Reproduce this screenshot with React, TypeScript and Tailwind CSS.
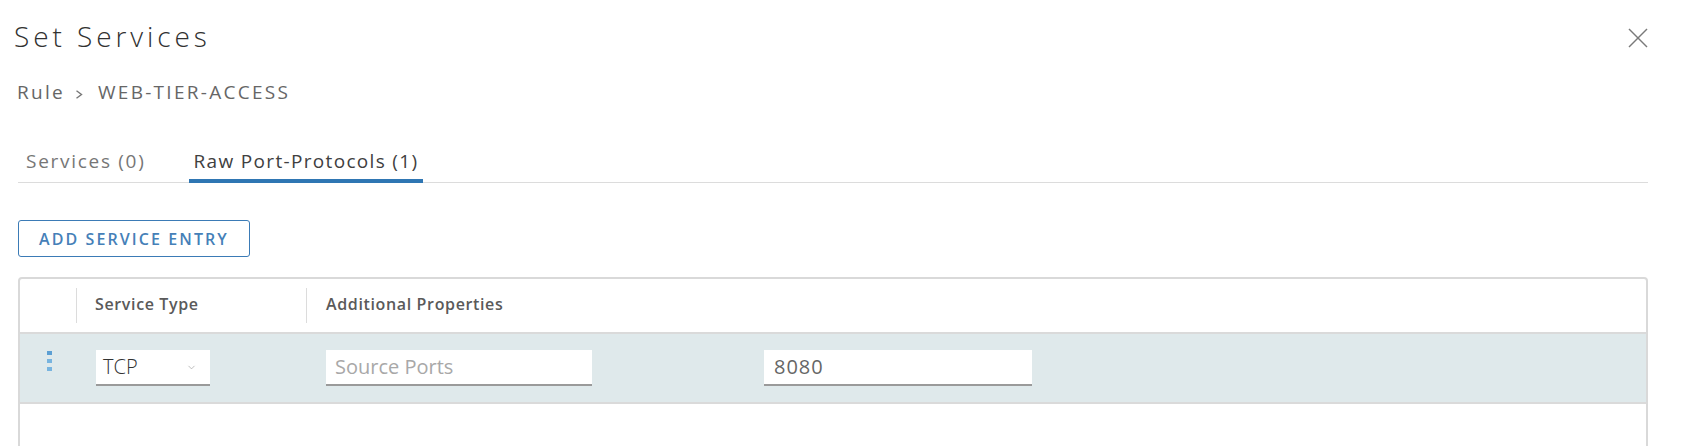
import { ChevronDown } from 'lucide-react';

function CloseIcon() {
  return (
    <svg width="20" height="20" viewBox="0 0 20 20" fill="none" stroke="#7a7a7a" strokeWidth="1.5">
      <line x1="1" y1="1" x2="19" y2="19" />
      <line x1="19" y1="1" x2="1" y2="19" />
    </svg>
  );
}

function Crumb() {
  return (
    <svg width="8" height="9" viewBox="0 0 8 9" fill="none" stroke="#777" strokeWidth="1.4">
      <polyline points="1.5,0.8 6.5,4.5 1.5,8.2" />
    </svg>
  );
}

function DragHandle() {
  return (
    <div className="flex flex-col gap-[4px]">
      <span className="block w-[5px] h-[4px] bg-[#5c9fd3]" />
      <span className="block w-[5px] h-[4px] bg-[#78b4df]" />
      <span className="block w-[5px] h-[4px] bg-[#78b4df]" />
    </div>
  );
}

export default function App() {
  return (
    <div className="w-[1682px] h-[446px] overflow-hidden bg-white font-['Open_Sans',sans-serif]">
      <div className="pl-[18px] pr-[34px]">
        {/* Title */}
        <div className="flex justify-between items-start pt-[16px]">
          <h1 className="-ml-[4px] text-[28px] leading-[40px] font-light tracking-[0.14em] text-[#313131]">
            Set Services
          </h1>
          <button className="mt-[12px] w-[20px] h-[20px]" aria-label="Close">
            <CloseIcon />
          </button>
        </div>

        {/* Breadcrumb */}
        <div className="mt-[23px] h-[26px] flex items-baseline text-[19px] leading-[26px] tracking-[0.12em] text-[#666]">
          <span className="-ml-[1px]">Rule</span>
          <span className="ml-[10px] self-end mb-[6px]">
            <Crumb />
          </span>
          <span className="ml-[15px]">WEB-TIER-ACCESS</span>
        </div>

        {/* Tabs */}
        <div className="mt-[43px] flex border-b border-[#dcdcdc] text-[19px] leading-[26px]">
          <button className="ml-[3px] px-[5px] pb-[5px] -mb-px border-b-4 border-transparent tracking-[0.09em] text-[#767676]">
            Services (0)
          </button>
          <button className="ml-[38px] px-[5px] pb-[5px] -mb-px border-b-4 border-[#2f76b3] tracking-[0.07em] text-[#404040]">
            Raw Port-Protocols (1)
          </button>
        </div>

        {/* Add entry */}
        <button className="mt-[37px] h-[37px] w-[232px] rounded-[3px] border border-[#3b7bb6] text-[16px] font-semibold tracking-[0.13em] text-[#4580b8]">
          ADD SERVICE ENTRY
        </button>

        {/* Grid */}
        <div className="mt-[20px] h-[220px] rounded-t-[4px] border-2 border-[#d9d9d9]">
          <div className="flex items-center h-[55px] border-b-2 border-[#dadada] text-[16px] font-semibold tracking-[0.04em] text-[#5a5a5a]">
            <div className="w-[57px] h-[35px] border-r border-[#dcdcdc]" />
            <div className="w-[230px] h-[35px] border-r border-[#dcdcdc] pl-[18px] pb-[4px] flex items-center">
              Service Type
            </div>
            <div className="pl-[19px] mb-[4px]">Additional Properties</div>
          </div>

          <div className="flex items-center h-[70px] bg-[#dfe9eb] border-b-2 border-[#dadada]">
            <div className="w-[57px] self-start pt-[17px] pl-[27px]">
              <DragHandle />
            </div>
            <div className="w-[230px] pl-[19px]">
              <div className="w-[114px] h-[36px] bg-white border-b-2 border-[#9a9a9a] flex items-center justify-between pl-[7px] pr-[13px]">
                <span className="text-[20px] font-light text-[#333]">TCP</span>
                <ChevronDown className="w-[11px] h-[11px] text-[#a0a0a0]" strokeWidth={1.5} />
              </div>
            </div>
            <div className="pl-[19px] flex">
              <div className="w-[266px] h-[36px] bg-white border-b-2 border-[#9a9a9a] flex items-center pl-[9px] text-[20px] text-[#a8a8a8]">
                Source Ports
              </div>
              <div className="ml-[172px] w-[268px] h-[36px] bg-white border-b-2 border-[#9a9a9a] flex items-center pl-[10px] text-[20px] tracking-[0.05em] text-[#666]">
                8080
              </div>
            </div>
          </div>
        </div>
      </div>
    </div>
  );
}
